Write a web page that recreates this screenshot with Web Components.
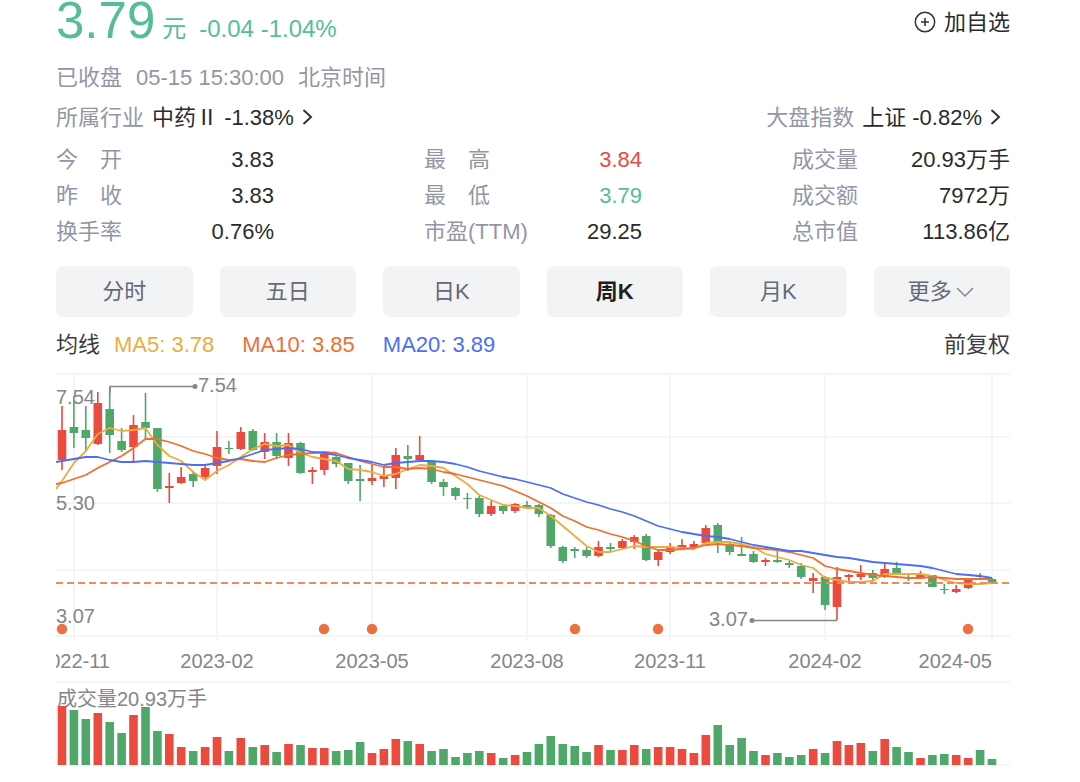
<!DOCTYPE html>
<html lang="zh-CN">
<head>
<meta charset="utf-8">
<meta name="viewport" content="width=device-width, initial-scale=1">
<title>个股行情</title>
<style>
  body {
    margin: 0;
    background: #fff;
    color: #2b2b2e;
    font: 22px/36px "Liberation Sans", "Noto Sans CJK SC", sans-serif;
    --muted: #9296a6;
    --up: #eb4a3e;
    --down: #4fa76a;
    --fall: #55bd97;
    --ma5: #edac3f;
    --ma10: #ef6f31;
    --ma20: #4c6ef5;
    --grid: #f5f5f6;
    --axis: #85868a;
  }
</style>
</head>
<body>
<stock-page></stock-page>

<script>
class BaseElement extends HTMLElement {
  render(html) {
    if (!this.shadowRoot) this.attachShadow({ mode: "open" });
    this.shadowRoot.innerHTML = html;
  }
}

/* Latest price, change and the watch-list button */
customElements.define("quote-header", class extends BaseElement {
  connectedCallback() {
    this.render(`
      <style>
        :host { display: flex; justify-content: space-between; align-items: flex-start; height: 59px; }
        .quote { display: flex; align-items: flex-end; color: var(--fall); font-size: 24px; line-height: 26px; white-space: nowrap; }
        .price { font-size: 51px; line-height: 42px; margin-right: 7px; }
        .unit { margin-right: 13px; }
        button { display: flex; align-items: center; gap: 8px; margin: 0; padding: 0; border: 0; background: none; color: inherit; font: inherit; line-height: 46px; cursor: pointer; }
        svg { margin-bottom: 2px; }
      </style>
      <div class="quote">
        <span class="price"><slot name="price"></slot></span>
        <span class="unit"><slot name="unit"></slot></span>
        <span><slot name="change"></slot></span>
      </div>
      <button type="button">
        <svg width="22" height="22" viewBox="0 0 22 22" fill="none" stroke="#333336" aria-hidden="true">
          <circle cx="11" cy="11" r="9.7" stroke-width="1.5"/>
          <path d="M11 7v8M7 11h8" stroke-width="1.6"/>
        </svg>
        <span><slot name="action"></slot></span>
      </button>`);
  }
});

/* Trading state and time */
customElements.define("market-status", class extends BaseElement {
  connectedCallback() {
    this.render(`
      <style>
        :host { display: flex; gap: 14px; color: var(--muted); line-height: 38px; white-space: nowrap; }
      </style>
      <slot></slot>`);
  }
});

/* A muted label with a link to a sector or an index */
customElements.define("index-link", class extends BaseElement {
  connectedCallback() {
    this.render(`
      <style>
        :host { display: block; line-height: 42px; white-space: nowrap; }
        a { display: flex; align-items: center; color: inherit; text-decoration: none; }
        .label { color: var(--muted); margin-right: 8px; }
        svg { margin: 0 8px 2px; }
      </style>
      <a href="#">
        <span class="label">${this.getAttribute("label")}</span>
        <span><slot></slot></span>
        <svg width="12" height="18" viewBox="0 0 12 18" fill="none" stroke="#333336" stroke-width="2" aria-hidden="true"><path d="M1.5 2L9 9l-7.500 7"/></svg>
      </a>`);
  }
});

/* Label and value pairs, three per row */
customElements.define("stat-grid", class extends BaseElement {
  connectedCallback() {
    const stats = [
      ["今　开", "3.83"], ["最　高", "3.84", "up"], ["成交量", "20.93万手"],
      ["昨　收", "3.83"], ["最　低", "3.79", "fall"], ["成交额", "7972万"],
      ["换手率", "0.76%"], ["市盈(TTM)", "29.25"], ["总市值", "113.86亿"]
    ];
    this.render(`
      <style>
        :host { display: block; margin-top: 3px; }
        dl { display: grid; grid-template-columns: repeat(3, 1fr); column-gap: 150px; margin: 0; }
        div { display: flex; justify-content: space-between; white-space: nowrap; }
        dt { color: var(--muted); }
        dd { margin: 0; }
        .up { color: var(--up); }
        .fall { color: var(--fall); }
      </style>
      <dl>${stats.map(([k, v, c = ""]) => `<div><dt>${k}</dt><dd class="${c}">${v}</dd></div>`).join("")}</dl>`);
  }
});

/* Period switch */
customElements.define("period-tab", class extends BaseElement {
  connectedCallback() {
    this.render(`
      <style>
        :host { display: block; flex: 1 1 0; }
        button { display: flex; justify-content: center; align-items: center; gap: 4px; width: 100%; height: 51px; margin: 0; padding: 0; border: 0; border-radius: 7px; background: #f2f3f5; color: #656979; font: inherit; cursor: pointer; }
        :host([selected]) button { color: #1f1f21; font-weight: 700; }
      </style>
      <button type="button"${this.hasAttribute("selected") ? ' aria-pressed="true"' : ""}>
        <span><slot></slot></span>
        ${this.hasAttribute("menu") ? '<svg width="20" height="12" viewBox="0 0 20 12" fill="none" stroke="#85868c" stroke-width="1.500" aria-hidden="true"><path d="M1 2l8 8 8-8"/></svg>' : ""}
      </button>`);
  }
});

customElements.define("period-tabs", class extends BaseElement {
  connectedCallback() {
    this.render(`
      <style>:host { display: flex; gap: 27px; margin-top: 16px; }</style>
      <slot></slot>`);
  }
});

/* Moving average legend */
customElements.define("average-legend", class extends BaseElement {
  connectedCallback() {
    this.render(`
      <style>
        :host { display: flex; margin-top: 10px; white-space: nowrap; color: #3c3c40; }
        .title { margin-right: 14px; }
        .values { display: flex; gap: 28px; flex: 1; }
        .ma5 { color: var(--ma5); }
        .ma10 { color: var(--ma10); }
        .ma20 { color: var(--ma20); }
      </style>
      <span class="title">均线</span>
      <div class="values"><span class="ma5">MA5: 3.78</span><span class="ma10">MA10: 3.85</span><span class="ma20">MA20: 3.89</span></div>
      <span>前复权</span>`);
  }
});

/* Weekly series: direction, high, body top, body bottom, low, volume top (chart units) */
const WEEKS = `
R 406 430 460 470 706|G 396 427 433 448 710|G 406 430 438 451 719|R 392 403 444 445 713|G 387 409 435 453 722
G 428 441 450 452 733|R 415 425 447 461 715|G 393 422 428 439 707|G 428 428 489 492 731|R 473 486 488 503 734
R 467 477 483 484 747|G 471 474 481 487 751|R 466 468 477 480 747|R 431 447 466 474 737|G 441 448 449 454 751
R 427 432 449 450 738|G 429 431 450 451 747|R 433 442 452 459 745|G 433 442 456 459 752|R 433 443 458 466 744
G 442 443 473 474 745|R 467 470 472 484 748|R 452 454 470 475 748|G 456 457 464 467 751|G 463 463 481 484 750
G 465 479 481 501 742|R 465 478 481 485 753|R 467 476 479 487 749|R 448 455 478 489 739|G 445 456 459 471 741
R 436 455 460 461 744|G 461 462 482 484 751|G 479 482 487 496 749|G 487 488 496 500 757|G 493 498 499 509 753
G 496 498 514 517 751|R 501 506 514 516 753|G 504 506 511 514 758|R 503 504 511 513 755|G 501 505 507 509 752
G 504 505 514 517 744|G 514 515 546 548 736|G 546 547 561 563 744|G 547 549 551 558 746|G 547 550 556 558 752
R 541 547 556 557 745|G 543 547 549 552 750|R 539 541 548 549 750|R 535 537 542 549 745|G 534 536 560 561 749
R 550 552 560 566 747|R 543 548 552 554 747|R 539 545 548 548 749|R 541 544 547 548 753|R 525 528 543 544 735
G 523 525 543 553 725|G 543 544 552 555 745|G 537 554 556 556 738|G 551 554 562 563 751|R 558 560 562 566 755
G 551 560 562 563 753|G 561 563 565 568 757|G 563 566 577 579 755|R 573 578 581 593 749|G 576 577 605 610 753
R 567 577 607 620 741|R 574 575 577 581 745|R 565 574 577 580 743|G 570 573 578 580 751|R 562 569 577 578 739
G 562 568 575 575 747|G 573 577 578 581 752|R 571 574 578 579 758|G 575 575 587 587 755|G 584 589 590 594 754
R 585 589 592 593 755|R 579 579 588 589 758|G 573 576 577 580 750|G 578 579 583 584 759`
  .trim().split(/[|\n]/).map(row => {
    const [dir, ...n] = row.split(" ");
    return [dir === "R" ? "up" : "down", ...n.map(Number)];
  });

/* The first value sits on the left edge, the rest on the weeks */
const AVERAGES = {
  ma5: [489, 481, 463, 451, 434, 428, 431, 430, 428, 445, 456, 461, 472, 480, 471, 465, 457, 449, 444, 446, 445, 453, 457, 459, 461, 469, 470, 472, 476, 474, 469, 465, 466, 468, 476, 484, 495, 500, 505, 506, 508, 508, 516, 526, 536, 546, 552, 552, 549, 546, 547, 547, 547, 548, 549, 543, 542, 542, 544, 547, 554, 557, 560, 565, 568, 578, 580, 582, 582, 581, 574, 574, 574, 574, 576, 580, 583, 584, 584, 583],
  ma10: [484, 483, 479, 475, 468, 462, 456, 448, 439, 439, 442, 446, 451, 454, 458, 460, 459, 461, 462, 458, 455, 454, 453, 452, 453, 457, 461, 464, 467, 467, 469, 468, 469, 472, 474, 477, 480, 483, 486, 491, 496, 502, 508, 516, 521, 527, 530, 534, 537, 541, 546, 550, 550, 549, 548, 545, 544, 545, 546, 548, 549, 550, 552, 555, 558, 566, 569, 571, 573, 575, 576, 577, 578, 578, 577, 578, 579, 579, 579, 579],
  ma20: [462, 461, 459, 457, 457, 460, 462, 462, 461, 462, 463, 464, 465, 465, 463, 461, 458, 454, 450, 449, 448, 449, 452, 453, 455, 458, 460, 462, 465, 463, 462, 461, 461, 462, 464, 467, 471, 474, 477, 479, 482, 485, 488, 494, 498, 502, 505, 509, 512, 516, 521, 526, 529, 532, 534, 536, 537, 539, 542, 545, 547, 549, 551, 551, 553, 555, 557, 558, 560, 562, 563, 564, 565, 566, 568, 571, 574, 575, 576, 578]
};
const LEFT = 56, RIGHT = 1010, FIRST = 62, LAST = 992;
const weekX = i => +(FIRST + i * (LAST - FIRST) / (WEEKS.length - 1)).toFixed(1);

const CHART_STYLE = `
  :host { display: block; }
  svg { display: block; width: 100%; height: auto; overflow: hidden; }
  text { font-size: 20px; fill: var(--axis); }
  .grid { stroke: var(--grid); stroke-width: 2; fill: none; }
  .up { fill: var(--up); }
  .down { fill: var(--down); }`;

customElements.define("candle-chart", class extends BaseElement {
  connectedCallback() {
    const candles = WEEKS.map(([dir, high, top, bottom, low], i) => {
      const x = weekX(i);
      return `<g class="${dir}"><rect x="${x - .8}" y="${high}" width="1.6" height="${low - high}"/><rect x="${x - 4.300}" y="${top}" width="8.600" height="${bottom - top}"/></g>`;
    }).join("");
    const lines = Object.entries(AVERAGES).map(([name, ys]) =>
      `<polyline class="${name}" points="${ys.map((y, i) => `${i ? weekX(i - 1) : LEFT},${y}`).join(" ")}"/>`).join("");
    const vertical = [74, 217, 372, 527, 670, 825, 992].map(x => `M${x} 373V640`).join("");
    const horizontal = [374, 437, 503, 570, 636].map(y => `M${LEFT} ${y}H${RIGHT}`).join("");
    const events = [62, 324, 372, 575, 658, 968].map(x => `<circle cx="${x}" cy="629" r="5.200"/>`).join("");
    const dates = [[74, "2022-11"], [217, "2023-02"], [372, "2023-05"], [527, "2023-08"], [670, "2023-11"], [825, "2024-02"]]
      .map(([x, t]) => `<text x="${x}" y="668" text-anchor="middle">${t}</text>`).join("");
    this.render(`
      <style>
        ${CHART_STYLE}
        :host { margin-top: 3px; }
        polyline { fill: none; stroke-width: 1.8; stroke-linejoin: round; }
        .ma5 { stroke: var(--ma5); }
        .ma10 { stroke: var(--ma10); }
        .ma20 { stroke: var(--ma20); }
        .events { fill: #ee7040; }
        .current { stroke: #f08a5b; stroke-width: 2; stroke-dasharray: 7 4; }
        .callout { fill: none; stroke: var(--axis); stroke-width: 1.5; }
        .dot { fill: var(--axis); }
      </style>
      <svg viewBox="56 366 954 312" role="img" aria-label="周K线图">
        <path class="grid" d="${vertical}${horizontal}"/>
        <text x="56" y="404">7.54</text>
        <text x="56" y="510">5.30</text>
        <text x="56" y="623">3.07</text>
        ${candles}
        ${lines}
        <path class="current" d="M56 583H1010"/>
        <g class="events">${events}</g>
        <path class="callout" d="M110 393V386.500H195M837 620.500H752"/>
        <circle class="dot" cx="195" cy="386.500" r="2.500"/>
        <circle class="dot" cx="752" cy="620.500" r="2.500"/>
        <text x="198" y="392">7.54</text>
        <text x="709" y="626">3.07</text>
        ${dates}
        <text x="992" y="668" text-anchor="end">2024-05</text>
      </svg>`);
  }
});

customElements.define("volume-chart", class extends BaseElement {
  connectedCallback() {
    const bars = WEEKS.map((week, i) =>
      `<rect class="${week[0]}" x="${(weekX(i) - 4.300).toFixed(1)}" y="${week[5]}" width="8.600" height="${765 - week[5]}"/>`).join("");
    this.render(`
      <style>${CHART_STYLE}</style>
      <svg viewBox="56 678 954 88" role="img" aria-label="成交量">
        <path class="grid" d="M56 682H1010M56 765H1010"/>
        <text x="57" y="706">成交量20.93万手</text>
        ${bars}
      </svg>`);
  }
});

customElements.define("stock-page", class extends BaseElement {
  connectedCallback() {
    this.render(`
      <style>
        :host { display: block; }
        main { padding: 0 70px 16px 56px; }
        .indexes { display: flex; justify-content: space-between; }
      </style>
      <main>
        <quote-header>
          <span slot="price">3.79</span><span slot="unit">元</span><span slot="change">-0.04 -1.04%</span>
          <span slot="action">加自选</span>
        </quote-header>
        <market-status><span>已收盘</span><span>05-15 15:30:00</span><span>北京时间</span></market-status>
        <div class="indexes">
          <index-link label="所属行业">中药Ⅱ -1.38%</index-link>
          <index-link label="大盘指数">上证 -0.82%</index-link>
        </div>
        <stat-grid></stat-grid>
        <period-tabs>
          <period-tab>分时</period-tab>
          <period-tab>五日</period-tab>
          <period-tab>日K</period-tab>
          <period-tab selected>周K</period-tab>
          <period-tab>月K</period-tab>
          <period-tab menu>更多</period-tab>
        </period-tabs>
        <average-legend></average-legend>
        <candle-chart></candle-chart>
        <volume-chart></volume-chart>
      </main>`);
  }
});
</script>
</body>
</html>
